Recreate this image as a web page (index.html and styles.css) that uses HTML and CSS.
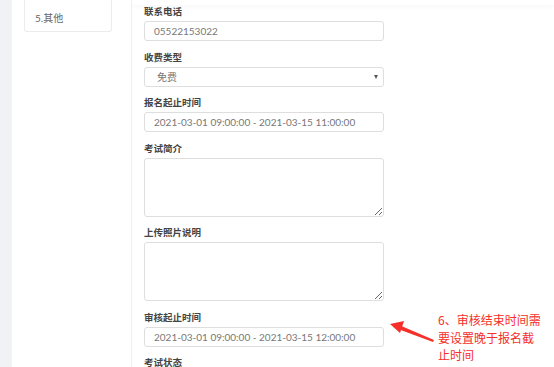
FILE: index.html
```html
<!DOCTYPE html>
<html>
  <head>
    <meta name="viewport" content="width=device-width, initial-scale=1" />
    <link rel="stylesheet" href="styles.css">
  </head>
  <body>
    <div class="page">
      <div class="main">
        <div class="side">
          <div class="step-card">
            <div class="step-item">5.其他</div>
          </div>
        </div>

        <form class="exam-form">
          <div class="topbar"></div>

          <div class="field">
            <label class="field-label">联系电话</label>
            <input type="text" class="field-input" value="05522153022" />
          </div>

          <div class="field">
            <label class="field-label">收费类型</label>
            <div class="select-box">
              <span>免费</span>
              <span class="select-arrow"></span>
            </div>
          </div>

          <div class="field">
            <label class="field-label">报名起止时间</label>
            <input type="text" class="field-input" value="2021-03-01 09:00:00 - 2021-03-15 11:00:00" />
          </div>

          <div class="field">
            <label class="field-label">考试简介</label>
            <textarea class="field-text"></textarea>
          </div>

          <div class="field">
            <label class="field-label">上传照片说明</label>
            <textarea class="field-text"></textarea>
          </div>

          <div class="field">
            <label class="field-label">审核起止时间</label>
            <input type="text" class="field-input" value="2021-03-01 09:00:00 - 2021-03-15 12:00:00" />
          </div>

          <div class="field">
            <label class="field-label">考试状态</label>
          </div>
        </form>
      </div>
    </div>

    <!-- annotation pointing at the review period field -->
    <svg class="note-arrow" width="50" height="30" viewBox="0 0 50 30">
      <polygon points="10,9 45,24 44,26 9,13" fill="#f5302a" />
      <polygon points="1,8 15,5 11,17" fill="#f5302a" />
    </svg>
    <div class="note">6、审核结束时间需<br />要设置晚于报名截<br />止时间</div>
  </body>
</html>
```

FILE: styles.css
```css
* {
  box-sizing: border-box;
}

body {
  margin: 0;
  font-family: Lato, "Noto Sans CJK SC", sans-serif;
  background-color: #f0f2f5;
  overflow: hidden;
}

.page {
  display: flex;
  height: 367px;
  padding-left: 12px;
}

.main {
  flex: 1;
  display: flex;
  background-color: white;
}

/* left steps column */
.side {
  width: 120px;
  padding: 0 19px 0 12px;
  border-right: 1px solid #f0f0f0;
}

.step-card {
  border: 1px solid #ececec;
  border-top: none;
  border-radius: 0 0 3px 3px;
  height: 32px;
  padding: 11px 0 0 10px;
}

.step-item {
  font-size: 10px;
  line-height: 14px;
  color: #666;
}

/* form column */
.exam-form {
  flex: 1;
  padding-left: 12px;
}

.topbar {
  height: 5px;
  margin-left: -12px;
  box-shadow: 0 3px 3px rgba(0, 0, 0, 0.025);
}

.field {
  width: 240px;
  margin-bottom: 9.5px;
}

.field-label {
  display: block;
  margin-bottom: 2px;
  font-size: 9.5px;
  line-height: 14px;
  font-weight: bold;
  color: #444;
}

.field-input,
.select-box,
.field-text {
  display: block;
  width: 100%;
  border: 1px solid #dedede;
  border-radius: 3px;
  background: white;
  font-family: Lato, "Noto Sans CJK SC", sans-serif;
  font-size: 10px;
  color: #777;
}

.field-input {
  height: 20px;
  padding: 0 9px;
  outline: none;
}

.select-box {
  height: 20px;
  display: flex;
  align-items: center;
  justify-content: space-between;
  padding: 0 5px 0 12px;
}

.select-arrow {
  width: 0;
  height: 0;
  border-left: 2.5px solid transparent;
  border-right: 2.5px solid transparent;
  border-top: 4px solid #555;
}

.field-text {
  height: 59px;
  resize: vertical;
  outline: none;
}

/* red annotation */
.note-arrow {
  position: absolute;
  left: 389px;
  top: 316px;
}

.note {
  position: absolute;
  left: 438px;
  top: 311px;
  font-family: "Noto Sans CJK SC", sans-serif;
  font-size: 12px;
  line-height: 17.5px;
  color: #f5302a;
}
```
